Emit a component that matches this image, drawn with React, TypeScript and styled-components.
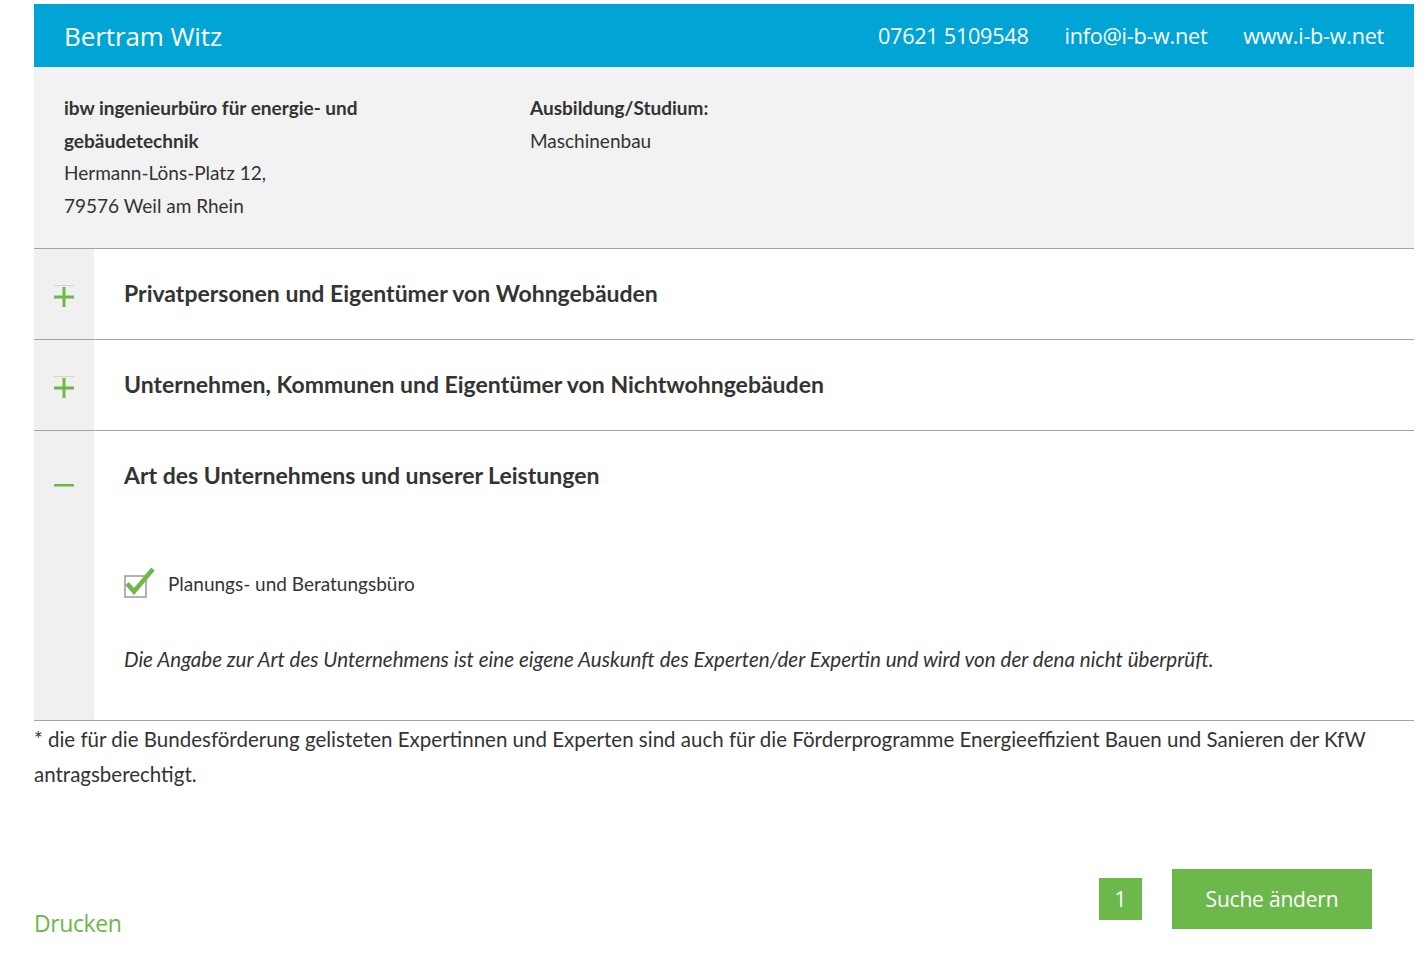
import React from "react";
import styled, { createGlobalStyle } from "styled-components";

const Global = createGlobalStyle`
  html, body { margin: 0; padding: 0; background: #fff; }
  body { font-family: Lato, "Noto Sans", sans-serif; color: #333; }
`;

const Page = styled.div`
  padding: 4px 8px 20px 34px;
  width: 1380px;
`;

const Header = styled.header`
  height: 63px;
  background: #00a4d5;
  color: #fff;
  display: flex;
  align-items: center;
  justify-content: space-between;
  padding: 0 30px;
  font-family: "Open Sans", sans-serif;
`;

const Name = styled.div`
  font-size: 26px;
  letter-spacing: -0.1px;
`;

const Contacts = styled.div`
  display: flex;
  gap: 36px;
  font-size: 21.6px;
  letter-spacing: -0.25px;
`;

const Info = styled.section`
  background: #f2f2f2;
  border-bottom: 1px solid #a3a3a3;
  padding: 25px 30px 24px;
  display: grid;
  grid-template-columns: 466px 1fr;
  font-size: 19px;
  line-height: 32.5px;
  height: 132px;
`;

const Column = styled.div<{ $max?: number }>`
  max-width: ${(p) => (p.$max ? `${p.$max}px` : "none")};
`;

const Strong = styled.div`
  font-weight: 700;
`;

const Item = styled.div<{ $open?: boolean }>`
  display: flex;
  border-bottom: 1px solid #a3a3a3;
  min-height: ${(p) => (p.$open ? 289 : 90)}px;
`;

const Side = styled.div`
  width: 60px;
  flex: none;
  background: #f0f0f0;
  display: flex;
  justify-content: center;
  padding-top: 36px;
  box-sizing: border-box;
`;

const Body = styled.div`
  flex: 1;
  padding: 0 30px;
`;

const Title = styled.h3`
  margin: 0;
  font-size: 23px;
  font-weight: 700;
  line-height: 28px;
  padding-top: 30px;
  color: #333;
`;

const CheckRow = styled.div`
  display: flex;
  align-items: center;
  gap: 12px;
  margin-top: 78px;
  font-size: 19px;
`;

const Note = styled.p`
  margin: 48px 0 0;
  font-style: italic;
  font-size: 20.6px;
`;

const Footnote = styled.p`
  margin: 0;
  font-size: 20.5px;
  line-height: 34.5px;
  padding-top: 1px;
`;

const Bottom = styled.div`
  display: flex;
  align-items: flex-end;
  justify-content: space-between;
  padding: 78px 42px 0 0;
`;

const Print = styled.a`
  color: #6cb84b;
  font-family: "Open Sans", sans-serif;
  font-size: 23px;
  letter-spacing: -0.4px;
  line-height: 30px;
`;

const Controls = styled.div`
  display: flex;
  align-items: center;
  gap: 30px;
  margin-bottom: 9px;
`;

const PageBtn = styled.div`
  width: 43px;
  height: 42px;
  background: #6cb84b;
  color: #fff;
  display: flex;
  align-items: center;
  justify-content: center;
  font-family: "Open Sans", sans-serif;
  font-size: 21px;
`;

const SearchBtn = styled.button`
  width: 200px;
  height: 60px;
  border: 0;
  padding: 0;
  background: #6cb84b;
  color: #fff;
  font-family: "Open Sans", sans-serif;
  font-size: 21px;
  letter-spacing: -0.2px;
`;

const Plus = () => (
  <svg width="22" height="22" viewBox="0 0 22 22">
    <rect x="1" y="0" width="20" height="1" fill="#6cb84b" opacity="0.3" />
    <rect x="9.5" y="2" width="3" height="20" fill="#6cb84b" />
    <rect x="1" y="10.5" width="20" height="3" fill="#6cb84b" />
  </svg>
);

const Minus = () => (
  <svg width="22" height="22" viewBox="0 0 22 22" style={{ marginTop: 7 }}>
    <rect x="1" y="10" width="20" height="2.5" fill="#6cb84b" />
  </svg>
);

const Check = () => (
  <svg width="32" height="32" viewBox="0 0 32 32">
    <rect x="1" y="9" width="21" height="21" fill="#fff" stroke="#a0a0a0" strokeWidth="1.6" />
    <path d="M3 16.5 L10 24.5 L29 2" fill="none" stroke="#6cb84b" strokeWidth="4.5" strokeLinejoin="miter" />
  </svg>
);

export default function App() {
  return (
    <>
      <Global />
      <Page>
        <Header>
          <Name>Bertram Witz</Name>
          <Contacts>
            <span>07621 5109548</span>
            <span>info@i-b-w.net</span>
            <span>www.i-b-w.net</span>
          </Contacts>
        </Header>
        <Info>
          <Column $max={380}>
            <Strong>ibw ingenieurbüro für energie- und gebäudetechnik</Strong>
            <div>Hermann-Löns-Platz 12,</div>
            <div>79576 Weil am Rhein</div>
          </Column>
          <Column>
            <Strong>Ausbildung/Studium:</Strong>
            <div>Maschinenbau</div>
          </Column>
        </Info>
        <Item>
          <Side><Plus /></Side>
          <Body><Title>Privatpersonen und Eigentümer von Wohngebäuden</Title></Body>
        </Item>
        <Item>
          <Side><Plus /></Side>
          <Body><Title>Unternehmen, Kommunen und Eigentümer von Nichtwohngebäuden</Title></Body>
        </Item>
        <Item $open>
          <Side><Minus /></Side>
          <Body>
            <Title>Art des Unternehmens und unserer Leistungen</Title>
            <CheckRow>
              <Check />
              <span>Planungs- und Beratungsbüro</span>
            </CheckRow>
            <Note>
              Die Angabe zur Art des Unternehmens ist eine eigene Auskunft des Experten/der Expertin und wird von der dena nicht überprüft.
            </Note>
          </Body>
        </Item>
        <Footnote>
          * die für die Bundesförderung gelisteten Expertinnen und Experten sind auch für die Förderprogramme Energieeffizient Bauen und Sanieren der KfW antragsberechtigt.
        </Footnote>
        <Bottom>
          <Print>Drucken</Print>
          <Controls>
            <PageBtn>1</PageBtn>
            <SearchBtn>Suche ändern</SearchBtn>
          </Controls>
        </Bottom>
      </Page>
    </>
  );
}
